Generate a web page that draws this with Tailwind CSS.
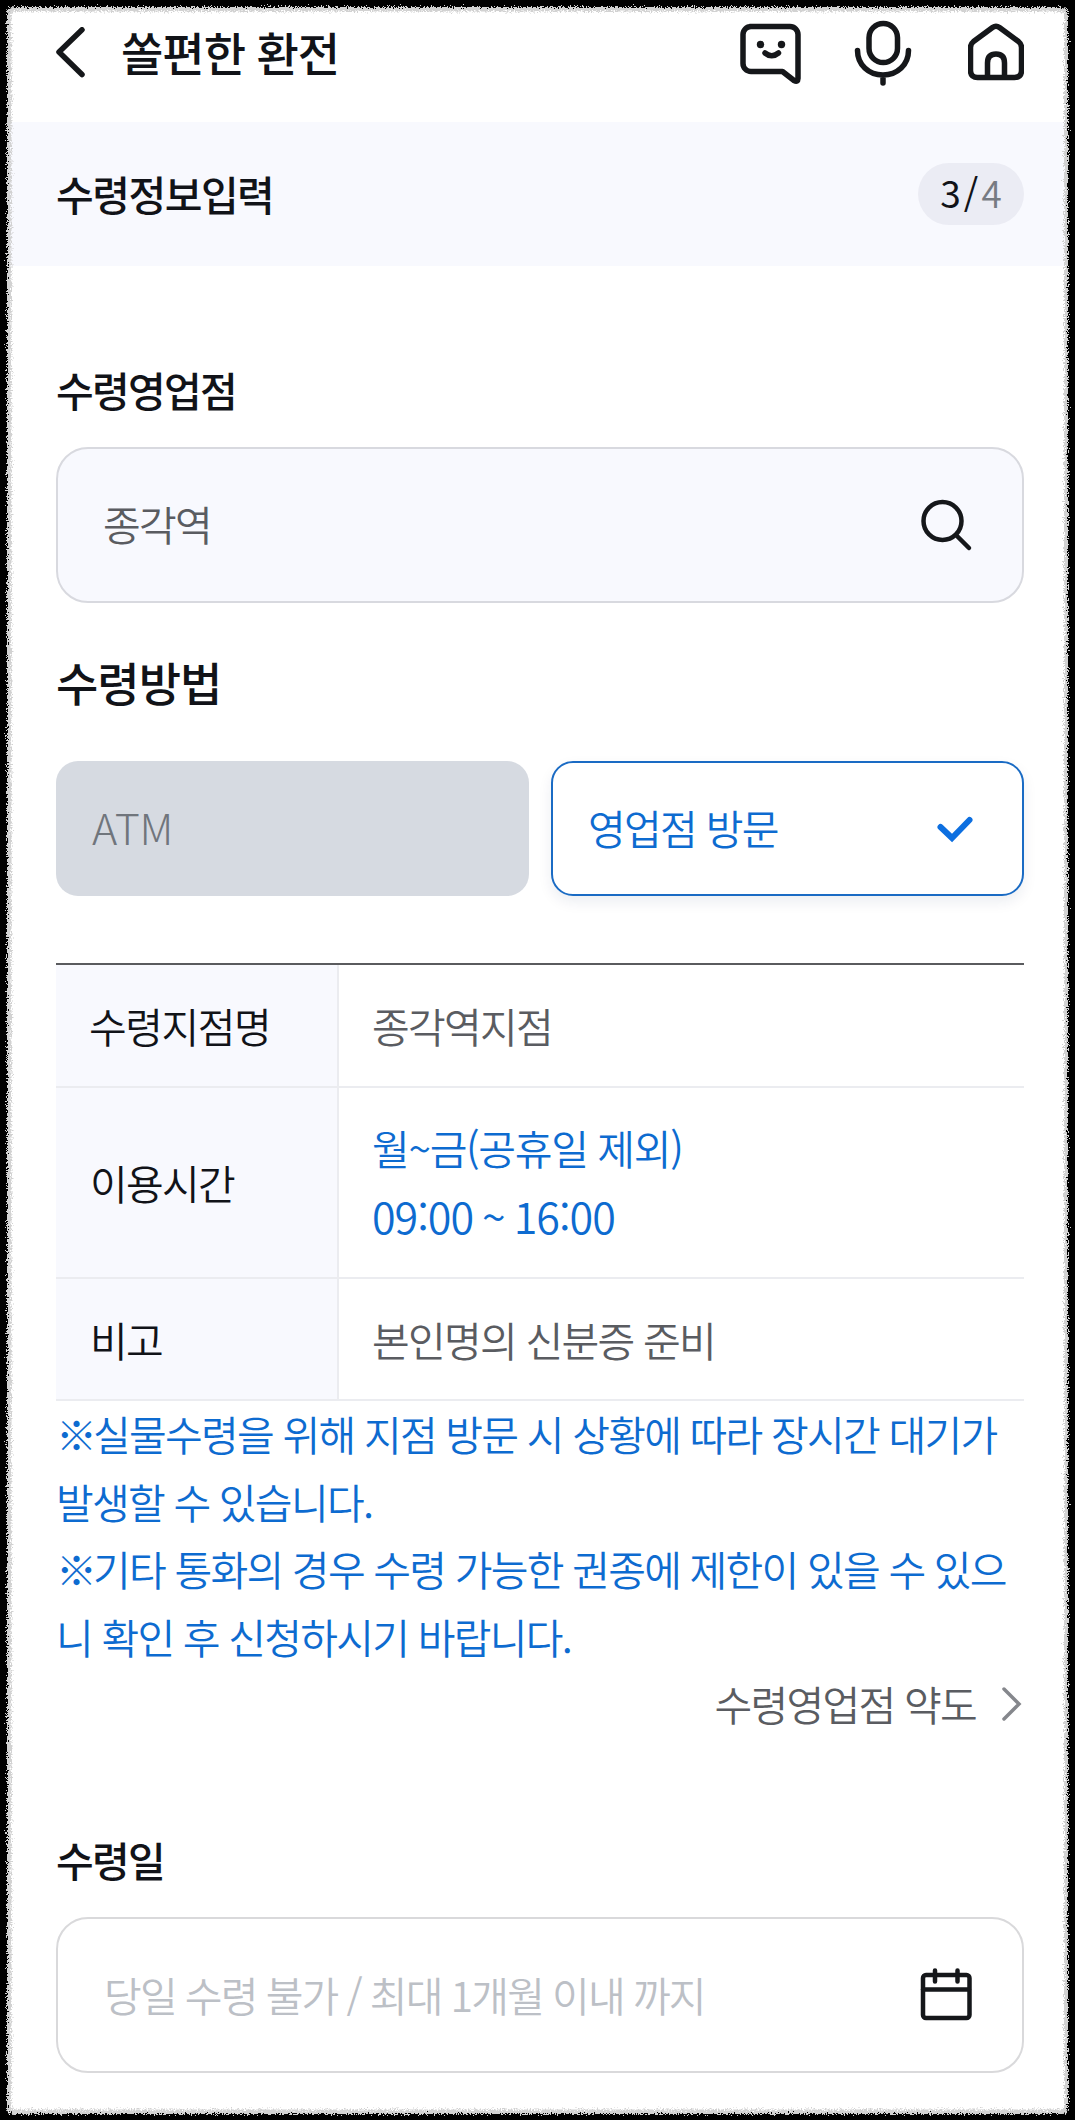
<!DOCTYPE html>
<html lang="ko">
<head>
  <meta charset="UTF-8" />
  <meta name="viewport" content="width=device-width, initial-scale=1.0" />
  <title>쏠편한 환전</title>
  <script src="https://cdn.jsdelivr.net/npm/@tailwindcss/browser@4"></script>
</head>
<body class="bg-black">
  <div class="relative w-[1075px] h-[2120px] overflow-hidden bg-white font-['Noto_Sans_CJK_KR',sans-serif] font-[350] text-[41px] leading-[68px] tracking-[-1.7px] [word-spacing:-0.4px] text-[#111318]">

    <header class="flex items-center justify-between h-[122px] pl-14 pr-[51px] pb-[16px]">
      <div class="flex items-center">
        <svg class="w-[30px] h-[52px]" viewBox="0 0 30 52" fill="none" stroke="#15171a" stroke-width="5.500" stroke-linecap="round" stroke-linejoin="round"><path d="M26 2.800L3 25l23 22.500" /></svg>
        <h1 class="ml-[35px] pb-[5px] text-[46px] font-medium tracking-[-1px]">쏠편한 환전</h1>
      </div>
      <div class="flex items-center">
        <svg class="w-[64px] h-[68px]" viewBox="0 0 64 68" fill="none" stroke="#15171a" stroke-width="5.500" stroke-linecap="round" stroke-linejoin="round">
          <path d="M12 7.500h40a8 8 0 0 1 8 8v44q0 4-4 2L44.500 52.500H13a8 8 0 0 1-8-8v-29a8 8 0 0 1 8-8z" />
          <path d="M27 34q6.700 5.500 13.500 0" />
          <circle cx="22.500" cy="25.500" r="3.700" fill="#15171a" stroke="none" />
          <circle cx="43.500" cy="25.500" r="3.700" fill="#15171a" stroke="none" />
        </svg>
        <svg class="w-[60px] h-[68px] ml-[50px]" viewBox="0 0 60 68" fill="none" stroke="#15171a" stroke-width="5.500" stroke-linecap="round">
          <rect x="17" y="4.500" width="28.500" height="39" rx="14.250" />
          <path d="M5.500 31.500c0 14 11 24.500 25.500 24.500s25.500-10.500 25.500-24.500M31 57v7" />
        </svg>
        <svg class="w-[56px] h-[68px] ml-[56px]" viewBox="0 0 56 68" fill="none" stroke="#15171a" stroke-width="5.500" stroke-linejoin="round">
          <path d="M24.500 8.500q3.500-2.500 7 0L50.500 22.500q3 2.500 3 6V51.500q0 7-7 7H9.500q-7 0-7-7V28.500q0-3.500 3-6z" />
          <path d="M19.500 58V44q0-9 8.500-9t8.500 9v14" />
        </svg>
      </div>
    </header>

    <div class="flex items-center justify-between h-[144px] pl-14 pr-[51px] bg-[#f8f9fe]">
      <h2 class="pb-[2px] font-medium tracking-[-1.5px]">수령정보입력</h2>
      <div class="flex items-center justify-center w-[106px] h-[62px] pl-[2px] pb-[3px] rounded-full bg-[#ebecf4] text-[37px] tracking-[2px] leading-none">
        <span class="font-normal">3</span><span class="mx-[1px] font-normal">/</span><span class="text-[#777b82]">4</span>
      </div>
    </div>

    <main class="pl-14 pr-[51px]">
      <label class="block pt-[89px] font-medium">수령영업점</label>
      <div class="flex items-center justify-between h-[156px] mt-[24px] pl-[45px] pr-[49px] rounded-[32px] border-2 border-[#d8d9df] bg-[#f8f9fe]">
        <span class="pb-[4px] text-[#5a5c61]">종각역</span>
        <svg class="w-[56px] h-[56px]" viewBox="0 0 56 56" fill="none" stroke="#15171a" stroke-width="4.500" stroke-linecap="round"><circle cx="25.500" cy="24" r="19" /><path d="M39 38L52 51" /></svg>
      </div>

      <h2 class="mt-[44px] text-[46px] font-medium tracking-[-1px]">수령방법</h2>
      <div class="flex gap-[22px] mt-[46px]">
        <button class="flex items-center w-[473px] h-[135px] pl-[36px] pb-[5px] rounded-[22px] bg-[#d6dae1] text-[43px] font-light tracking-[-0.3px] text-[#70757c]">ATM</button>
        <button class="flex items-center justify-between w-[473px] h-[135px] pl-[35px] pr-[48px] rounded-[22px] border-2 border-[#1a6bc4] bg-white text-[#0d6bd0] shadow-[0_6px_14px_rgba(0,40,90,0.08)]">
          <span class="pb-[4px]">영업점 방문</span>
          <svg class="w-[38px] h-[28px]" viewBox="0 0 38 28" fill="none" stroke="#0d6fe0" stroke-width="6" stroke-linecap="round"><path d="M4.500 12L16 23 33.500 5" /></svg>
        </button>
      </div>

      <div class="grid grid-cols-[283px_1fr] mt-[67px] border-t-2 border-[#5a5b5e]">
        <div class="flex items-center h-[123px] pl-[33px] pb-[2px] border-r-2 border-b-2 border-[#ebecf0] bg-[#f8f9fe] tracking-[-1.5px]">수령지점명</div>
        <div class="flex items-center h-[123px] pl-[33px] pb-[2px] border-b-2 border-[#ebecf0] text-[#5a5c61]">종각역지점</div>
        <div class="flex items-center h-[191px] pl-[34px] pb-[2px] border-r-2 border-b-2 border-[#ebecf0] bg-[#f8f9fe]">이용시간</div>
        <div class="flex items-center h-[191px] pl-[33px] pb-[3px] border-b-2 border-[#ebecf0] text-[#0d6bd0]">
          <div>
            <p class="tracking-[-1.3px]">월~금(공휴일 제외)</p>
            <p class="text-[43px] tracking-[-1px] [word-spacing:-2px]">09:00 ~ 16:00</p>
          </div>
        </div>
        <div class="flex items-center h-[122px] pl-[34px] border-r-2 border-b-2 border-[#ebecf0] bg-[#f8f9fe]">비고</div>
        <div class="flex items-center h-[122px] pl-[33px] border-b-2 border-[#ebecf0] text-[#5a5c61]">본인명의 신분증 준비</div>
      </div>

      <p class="-mt-[1px] text-[#0d6bd0] leading-[67.5px] whitespace-nowrap">
        <span class="tracking-[-4px]">※</span>실물수령을 위해 지점 방문 시 상황에 따라 장시간 대기가<br>
        발생할 수 있습니다.<br>
        <span class="tracking-[-4px]">※</span>기타 통화의 경우 수령 가능한 권종에 제한이 있을 수 있으<br>
        니 확인 후 신청하시기 바랍니다.
      </p>
      <a class="flex items-center justify-end h-[66px] text-[#5a5c61]">
        수령영업점 약도
        <svg class="w-[24px] h-[40px] ml-[24px]" viewBox="0 0 24 40" fill="none" stroke="#85878c" stroke-width="3.500" stroke-linecap="round"><path d="M4 6l15 15L4 36" /></svg>
      </a>

      <label class="block mt-[89px] font-medium">수령일</label>
      <div class="flex items-center justify-between h-[156px] mt-[24px] pl-[46px] pr-[48px] rounded-[32px] border-2 border-[#d9d9db] bg-white">
        <span class="pb-[2px] tracking-[-1.8px] [word-spacing:-0.7px] text-[#bcc0c6]">당일 수령 불가 / 최대 1개월 이내 까지</span>
        <svg class="w-[56px] h-[60px]" viewBox="0 0 56 60" fill="none" stroke="#15171a" stroke-width="4.500" stroke-linecap="round">
          <rect x="5" y="10" width="46.500" height="43" rx="3" />
          <path d="M5 24.500h46M17 5.500v11M39.500 5.500v11" />
        </svg>
      </div>
    </main>

    <!-- rough torn-edge frame -->
    <svg class="absolute inset-0 w-[1075px] h-[2120px] pointer-events-none" viewBox="0 0 1075 2120" fill="none">
      <filter id="grain" x="-20" y="-20" width="1115" height="2160" filterUnits="userSpaceOnUse">
        <feTurbulence type="fractalNoise" baseFrequency="0.7" numOctaves="2" seed="4" />
        <feDisplacementMap in="SourceGraphic" scale="8" xChannelSelector="R" yChannelSelector="G" />
      </filter>
      <g filter="url(#grain)">
        <rect x="9" y="9" width="1057.500" height="2103" rx="6" stroke="#d2d2d2" stroke-width="5" />
        <path fill="#000" fill-rule="evenodd" d="M-20-20h1115v2160H-20zM13 7q-6 0-6 6v2095q0 6 6 6h1049q6 0 6-6V13q0-6-6-6z" />
      </g>
    </svg>
  </div>
</body>
</html>
